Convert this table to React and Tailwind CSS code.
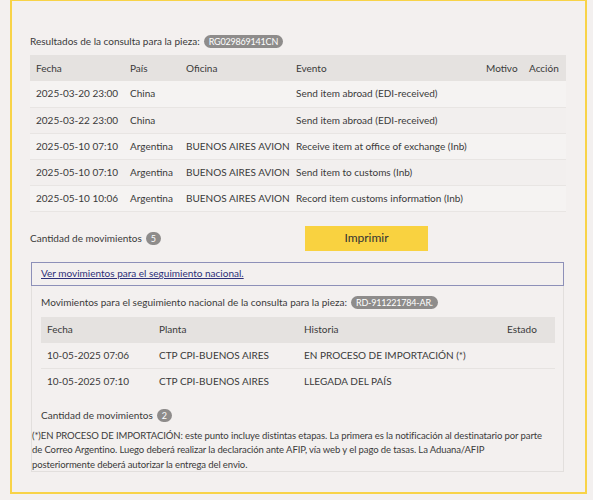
import React from "react";

const rows = [
  ["2025-03-20 23:00", "China", "", "Send item abroad (EDI-received)"],
  ["2025-03-22 23:00", "China", "", "Send item abroad (EDI-received)"],
  ["2025-05-10 07:10", "Argentina", "BUENOS AIRES AVION", "Receive item at office of exchange (Inb)"],
  ["2025-05-10 07:10", "Argentina", "BUENOS AIRES AVION", "Send item to customs (Inb)"],
  ["2025-05-10 10:06", "Argentina", "BUENOS AIRES AVION", "Record item customs information (Inb)"],
];

const nacional = [
  ["10-05-2025 07:06", "CTP CPI-BUENOS AIRES", "EN PROCESO DE IMPORTACIÓN (*)"],
  ["10-05-2025 07:10", "CTP CPI-BUENOS AIRES", "LLEGADA DEL PAÍS"],
];

function Badge({ children }) {
  return (
    <span className="inline-block rounded-full bg-[#8e8c8b] px-[5px] text-[9px] leading-[13px] tracking-[-0.2px] text-white">
      {children}
    </span>
  );
}

export default function App() {
  return (
    <div
      className="h-[500px] w-[593px] bg-[#f3f0ef] text-[#3a3a3a]"
      style={{ fontFamily: "Lato, 'Noto Sans', sans-serif" }}
    >
      <div className="ml-[10px] h-[494px] w-[577px] border-2 border-t-[1px] border-[#f8d347] px-[18px] pt-[33px]">
        <div className="flex items-center gap-1 text-[10px]">
          <span>Resultados de la consulta para la pieza:</span>
          <Badge>RG029869141CN</Badge>
        </div>

        <table className="mt-[6px] w-[536px] table-fixed whitespace-nowrap text-[10px]">
          <colgroup>
            <col className="w-[94px]" />
            <col className="w-[56px]" />
            <col className="w-[110px]" />
            <col className="w-[190px]" />
            <col className="w-[43px]" />
            <col className="w-[43px]" />
          </colgroup>
          <thead>
            <tr className="h-[26px] bg-[#e5e2e0] text-left">
              <th className="pl-[6px] font-normal">Fecha</th>
              <th className="pl-[6px] font-normal">País</th>
              <th className="pl-[6px] font-normal">Oficina</th>
              <th className="pl-[6px] font-normal">Evento</th>
              <th className="pl-[6px] font-normal">Motivo</th>
              <th className="pl-[6px] font-normal">Acción</th>
            </tr>
          </thead>
          <tbody>
            {rows.map((r, i) => (
              <tr
                key={i}
                className={
                  "h-[26px] border-b border-[#e8e5e3] " +
                  (i % 2 === 0 ? "bg-[#f5f3f2]" : "bg-[#f2efee]")
                }
              >
                <td className="pl-[6px]">{r[0]}</td>
                <td className="pl-[6px]">{r[1]}</td>
                <td className="pl-[6px]">{r[2]}</td>
                <td className="pl-[6px]">{r[3]}</td>
                <td></td>
                <td></td>
              </tr>
            ))}
          </tbody>
        </table>

        <div className="mt-[14px] flex items-center">
          <div className="flex w-[275px] items-center gap-1 text-[10px]">
            <span>Cantidad de movimientos</span>
            <Badge>5</Badge>
          </div>
          <button className="h-[25px] w-[123px] bg-[#f9d240] text-[12px] text-[#333]">
            Imprimir
          </button>
        </div>

        <div className="mt-[11px] ml-[1px] w-[533px]">
          <div className="flex h-[24px] items-center border border-[#8d90b8] px-[9px] text-[10px]">
            <a className="text-[#2c2f78] underline">Ver movimientos para el seguimiento nacional.</a>
          </div>
          <div className="h-[186px] border border-t-0 border-[#e2dfdd] pt-[9px] text-[10px]">
            <div className="flex items-center gap-1 px-[9px]">
              <span>Movimientos para el seguimiento nacional de la consulta para la pieza:</span>
              <Badge>RD-911221784-AR.</Badge>
            </div>
            <table className="mt-[7px] ml-[9px] w-[514px] table-fixed whitespace-nowrap text-[10px]">
              <colgroup>
                <col className="w-[112px]" />
                <col className="w-[145px]" />
                <col className="w-[203px]" />
                <col className="w-[54px]" />
              </colgroup>
              <thead>
                <tr className="h-[26px] bg-[#e5e2e0] text-left">
                  <th className="pl-[6px] font-normal">Fecha</th>
                  <th className="pl-[6px] font-normal">Planta</th>
                  <th className="pl-[6px] font-normal">Historia</th>
                  <th className="pl-[6px] font-normal">Estado</th>
                </tr>
              </thead>
              <tbody>
                {nacional.map((r, i) => (
                  <tr key={i} className="h-[26px] border-b border-[#e6e3e1] last:border-b-0">
                    <td className="pl-[6px]">{r[0]}</td>
                    <td className="pl-[6px]">{r[1]}</td>
                    <td className="pl-[6px]">{r[2]}</td>
                    <td></td>
                  </tr>
                ))}
              </tbody>
            </table>
            <div className="mt-[13px] flex items-center gap-1 px-[9px]">
              <span>Cantidad de movimientos</span>
              <Badge>2</Badge>
            </div>
            <p className="mt-[6px] text-[9.5px] leading-[14.5px] tracking-[-0.1px]">
              (*)EN PROCESO DE IMPORTACIÓN: este punto incluye distintas etapas. La primera es la notificación al destinatario por parte
              <br />
              de Correo Argentino. Luego deberá realizar la declaración ante AFIP, vía web y el pago de tasas. La Aduana/AFIP
              <br />
              posteriormente deberá autorizar la entrega del envio.
            </p>
          </div>
        </div>
      </div>
    </div>
  );
}
